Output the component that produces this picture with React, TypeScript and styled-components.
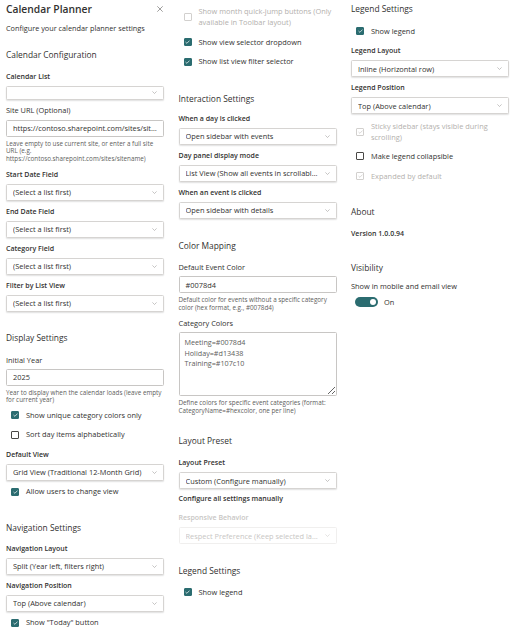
import React from "react";
import styled, { createGlobalStyle, css } from "styled-components";

const GlobalStyle = createGlobalStyle`
  html, body { margin: 0; padding: 0; background: #ffffff; }
  body {
    font-family: "Segoe UI", "Open Sans", "Noto Sans", sans-serif;
    color: #323130;
    -webkit-font-smoothing: antialiased;
  }
  * { box-sizing: border-box; }
`;

const TEAL = "#2b6c70";

const Page = styled.div`
  display: grid;
  grid-template-columns: repeat(3, 158px);
  column-gap: 14.5px;
  padding: 0 6px;
  width: 521px;
  height: 635px;
  overflow: hidden;
`;

const Column = styled.div`
  display: flex;
  flex-direction: column;
  min-width: 0;
`;

const HeaderRow = styled.div`
  display: flex;
  align-items: center;
  justify-content: space-between;
  height: 18px;
`;

const Title = styled.div`
  font-size: 10.3px;
  font-weight: 600;
  line-height: 18px;
`;

const Close = styled.span`
  display: flex;
  width: 6px;
  height: 6px;
  margin-right: 1px;
  margin-bottom: 1px;
`;

const Subtitle = styled.div<{ $mt?: number }>`
  margin-top: ${(p) => p.$mt ?? 5}px;
  font-size: 7.3px;
  line-height: 10px;
`;

const SectionTitle = styled.div<{ $mt?: number }>`
  margin-top: ${(p) => p.$mt ?? 20}px;
  font-size: 8.4px;
  font-weight: 400;
  line-height: 14px;
  white-space: nowrap;
`;

const FieldLabel = styled.div<{ $mt?: number; $strong?: boolean; $disabled?: boolean }>`
  margin-top: ${(p) => p.$mt ?? 6}px;
  font-size: ${(p) => (p.$strong ? 7 : 7.4)}px;
  line-height: 10px;
  height: 10px;
  font-weight: ${(p) => (p.$strong ? 600 : 400)};
  color: ${(p) => (p.$disabled ? "#c8c6c4" : "#323130")};
  white-space: nowrap;
`;

const SelectBox = styled.div<{ $empty?: boolean; $disabled?: boolean; $mt?: number }>`
  margin-top: ${(p) => p.$mt ?? 4}px;
  height: ${(p) => (p.$empty ? 13.5 : 17)}px;
  display: flex;
  align-items: center;
  padding: 0 6px 0 6px;
  border: 1px solid ${(p) => (p.$disabled ? "#f0efee" : "#d6d4d2")};
  border-radius: 1.5px;
  background: #ffffff;
  box-shadow: ${(p) => (p.$disabled ? "none" : "0 1px 1.5px rgba(0, 0, 0, 0.12)")};
  font-size: 7.4px;
  color: ${(p) => (p.$disabled ? "#c8c6c4" : "#323130")};
`;

const SelectText = styled.span`
  flex: 1;
  min-width: 0;
  overflow: hidden;
  white-space: nowrap;
  text-overflow: ellipsis;
`;

const Chevron = styled.svg`
  flex: none;
  width: 5px;
  height: 3px;
  margin-left: 4px;
`;

const TextBox = styled.div<{ $mt?: number }>`
  margin-top: ${(p) => p.$mt ?? 4}px;
  height: 17px;
  display: flex;
  align-items: center;
  padding: 0 6px;
  border: 1px solid #c8c6c4;
  border-radius: 1.5px;
  font-size: 7.4px;
  color: #323130;
  overflow: hidden;
  white-space: nowrap;
`;

const TextValue = styled.span`
  overflow: hidden;
  white-space: nowrap;
  text-overflow: ellipsis;
`;

const TextArea = styled.textarea`
  margin-top: 4px;
  height: 63.5px;
  width: 100%;
  padding: 3.5px 5px;
  border: 1px solid #c8c6c4;
  border-radius: 1.5px;
  font-family: inherit;
  font-size: 7.2px;
  line-height: 10.6px;
  color: #605e5c;
  resize: vertical;
  outline: none;
  display: block;
`;

const HelpText = styled.div<{ $mt?: number }>`
  margin-top: ${(p) => p.$mt ?? 3}px;
  font-size: 6.3px;
  line-height: 7.7px;
  color: #605e5c;
`;

const CheckRow = styled.div<{ $mt?: number; $disabled?: boolean }>`
  margin-top: ${(p) => p.$mt ?? 8.5}px;
  display: flex;
  align-items: center;
  padding-left: 5px;
  font-size: 7.4px;
  line-height: 11px;
  color: ${(p) => (p.$disabled ? "#b3b0ad" : "#323130")};
`;

const Box = styled.span<{ $checked?: boolean; $disabled?: boolean }>`
  flex: none;
  width: 8px;
  height: 8px;
  margin-right: 7px;
  border-radius: 1px;
  display: flex;
  align-items: center;
  justify-content: center;
  ${(p) =>
    p.$checked && !p.$disabled
      ? css`
          background: ${TEAL};
          border: 1px solid ${TEAL};
        `
      : css`
          background: #ffffff;
          border: 1px solid ${p.$disabled ? "#d2d0ce" : "#4a4846"};
        `}
`;

const CheckLabel = styled.span`
  min-width: 0;
`;

const StrongText = styled.div<{ $mt?: number }>`
  margin-top: ${(p) => p.$mt ?? 10}px;
  font-size: 7px;
  line-height: 10px;
  font-weight: 600;
  white-space: nowrap;
`;

const ToggleRow = styled.div<{ $mt?: number }>`
  margin-top: ${(p) => p.$mt ?? 6}px;
  display: flex;
  align-items: center;
  padding-left: 4px;
  font-size: 7.4px;
  line-height: 10px;
`;

const ToggleTrack = styled.span<{ $on?: boolean }>`
  flex: none;
  width: 23px;
  height: 10px;
  border-radius: 5px;
  background: ${(p) => (p.$on ? TEAL : "#ffffff")};
  display: flex;
  align-items: center;
  justify-content: ${(p) => (p.$on ? "flex-end" : "flex-start")};
  padding: 0 2px;
  margin-right: 6px;
`;

const ToggleKnob = styled.span`
  width: 6px;
  height: 6px;
  border-radius: 50%;
  background: #ffffff;
`;

function Select({
  value,
  empty,
  disabled,
  mt,
}: {
  value?: string;
  empty?: boolean;
  disabled?: boolean;
  mt?: number;
}) {
  return (
    <SelectBox $empty={empty} $disabled={disabled} $mt={mt}>
      <SelectText>{value}</SelectText>
      <Chevron viewBox="0 0 5 3">
        <polyline
          points="0.4,0.4 2.5,2.5 4.6,0.4"
          fill="none"
          stroke={disabled ? "#d2d0ce" : "#a19f9d"}
          strokeWidth="0.6"
        />
      </Chevron>
    </SelectBox>
  );
}

function Check({
  label,
  checked,
  disabled,
  mt,
}: {
  label: React.ReactNode;
  checked?: boolean;
  disabled?: boolean;
  mt?: number;
}) {
  return (
    <CheckRow $mt={mt} $disabled={disabled}>
      <Box $checked={checked} $disabled={disabled}>
        {checked && (
          <svg width="5" height="4" viewBox="0 0 5 4">
            <polyline
              points="0.5,2 1.9,3.3 4.5,0.6"
              fill="none"
              stroke={disabled ? "#c8c6c4" : "#ffffff"}
              strokeWidth="0.7"
            />
          </svg>
        )}
      </Box>
      <CheckLabel>{label}</CheckLabel>
    </CheckRow>
  );
}

export default function App() {
  return (
    <>
      <GlobalStyle />
      <Page>
        <Column>
          <HeaderRow>
            <Title>Calendar Planner</Title>
            <Close>
              <svg width="6" height="6" viewBox="0 0 6 6">
                <path d="M0.3 0.3 L5.7 5.7 M5.7 0.3 L0.3 5.7" stroke="#605e5c" strokeWidth="0.6" />
              </svg>
            </Close>
          </HeaderRow>
          <Subtitle>Configure your calendar planner settings</Subtitle>

          <SectionTitle $mt={15}>Calendar Configuration</SectionTitle>
          <FieldLabel $strong $mt={10}>Calendar List</FieldLabel>
          <Select empty />
          <FieldLabel $mt={5}>Site URL (Optional)</FieldLabel>
          <TextBox $mt={5}>
            <TextValue>https://contoso.sharepoint.com/sites/sitename</TextValue>
          </TextBox>
          <HelpText>
            Leave empty to use current site, or enter a full site URL (e.g.
            https://contoso.sharepoint.com/sites/sitename)
          </HelpText>
          <FieldLabel $strong $mt={7}>Start Date Field</FieldLabel>
          <Select value="(Select a list first)" />
          <FieldLabel $strong>End Date Field</FieldLabel>
          <Select value="(Select a list first)" />
          <FieldLabel $strong>Category Field</FieldLabel>
          <Select value="(Select a list first)" />
          <FieldLabel $strong>Filter by List View</FieldLabel>
          <Select value="(Select a list first)" />

          <SectionTitle $mt={19}>Display Settings</SectionTitle>
          <FieldLabel $mt={10}>Initial Year</FieldLabel>
          <TextBox>2025</TextBox>
          <HelpText>Year to display when the calendar loads (leave empty for current year)</HelpText>
          <Check mt={5.5} checked label="Show unique category colors only" />
          <Check label="Sort day items alphabetically" />
          <FieldLabel $strong $mt={9.5}>Default View</FieldLabel>
          <Select value="Grid View (Traditional 12-Month Grid)" />
          <Check mt={5.5} checked label="Allow users to change view" />

          <SectionTitle $mt={23.5}>Navigation Settings</SectionTitle>
          <FieldLabel $strong $mt={9}>Navigation Layout</FieldLabel>
          <Select value="Split (Year left, filters right)" />
          <FieldLabel $strong>Navigation Position</FieldLabel>
          <Select value="Top (Above calendar)" />
          <Check mt={5.5} checked label={'Show "Today" button'} />
        </Column>

        <Column>
          <Check
            mt={5.5}
            disabled
            label="Show month quick-jump buttons (Only available in Toolbar layout)"
          />
          <Check mt={9} checked label="Show view selector dropdown" />
          <Check checked label="Show list view filter selector" />

          <SectionTitle $mt={24.5}>Interaction Settings</SectionTitle>
          <FieldLabel $strong $mt={8}>When a day is clicked</FieldLabel>
          <Select value="Open sidebar with events" />
          <FieldLabel $strong>Day panel display mode</FieldLabel>
          <Select value="List View (Show all events in scrollable panel)" />
          <FieldLabel $strong>When an event is clicked</FieldLabel>
          <Select value="Open sidebar with details" />

          <SectionTitle $mt={20}>Color Mapping</SectionTitle>
          <FieldLabel $mt={9}>Default Event Color</FieldLabel>
          <TextBox $mt={4.5}>#0078d4</TextBox>
          <HelpText>
            Default color for events without a specific category color (hex format, e.g., #0078d4)
          </HelpText>
          <FieldLabel $mt={7}>Category Colors</FieldLabel>
          <TextArea readOnly defaultValue={"Meeting=#0078d4\nHoliday=#d13438\nTraining=#107c10"} />
          <HelpText>
            Define colors for specific event categories (format: CategoryName=#hexcolor, one per line)
          </HelpText>

          <SectionTitle $mt={20}>Layout Preset</SectionTitle>
          <FieldLabel $strong $mt={10}>Layout Preset</FieldLabel>
          <Select value="Custom (Configure manually)" />
          <StrongText $mt={5}>Configure all settings manually</StrongText>
          <FieldLabel $strong $disabled $mt={9}>Responsive Behavior</FieldLabel>
          <Select disabled value="Respect Preference (Keep selected layout)" />

          <SectionTitle $mt={20}>Legend Settings</SectionTitle>
          <Check mt={8.5} checked label="Show legend" />
        </Column>

        <Column>
          <SectionTitle $mt={2}>Legend Settings</SectionTitle>
          <Check mt={9.5} checked label="Show legend" />
          <FieldLabel $strong $mt={9.5}>Legend Layout</FieldLabel>
          <Select value="Inline (Horizontal row)" />
          <FieldLabel $strong>Legend Position</FieldLabel>
          <Select value="Top (Above calendar)" />
          <Check
            mt={6.5}
            checked
            disabled
            label="Sticky sidebar (stays visible during scrolling)"
          />
          <Check mt={8} label="Make legend collapsible" />
          <Check mt={9} checked disabled label="Expanded by default" />

          <SectionTitle $mt={23.5}>About</SectionTitle>
          <StrongText $mt={10}>Version 1.0.0.94</StrongText>

          <SectionTitle $mt={22}>Visibility</SectionTitle>
          <FieldLabel $mt={6}>Show in mobile and email view</FieldLabel>
          <ToggleRow>
            <ToggleTrack $on>
              <ToggleKnob />
            </ToggleTrack>
            On
          </ToggleRow>
        </Column>
      </Page>
    </>
  );
}
